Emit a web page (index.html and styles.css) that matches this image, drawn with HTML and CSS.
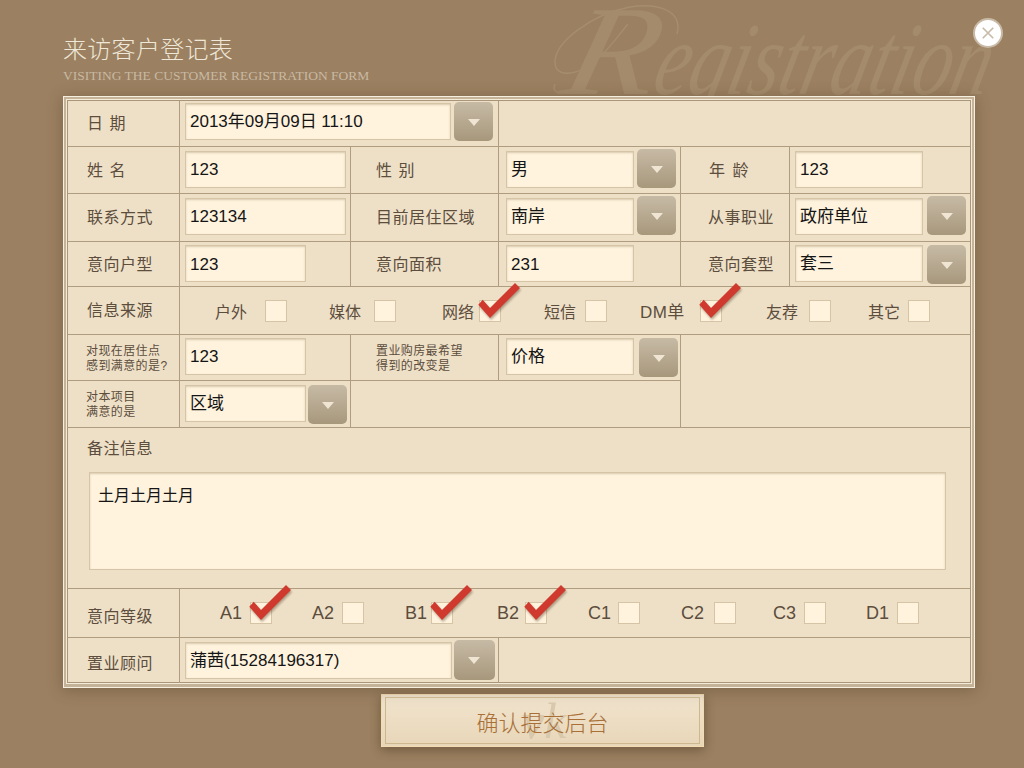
FILE: index.html
```html
<!DOCTYPE html>
<html lang="zh-CN">
<head>
    <meta charset="UTF-8">
    <meta name="viewport" content="width=device-width, initial-scale=1.0">
    <title>来访客户登记表</title>
    <link rel="stylesheet" href="styles.css">
</head>
<body>
    <svg width="0" height="0" class="defs">
        <symbol id="tick" viewBox="0 0 42 36">
            <polygon points="0.3,21.7 4.7,16.7 12,25 37,0 42,5 12,35"></polygon>
        </symbol>
    </svg>

    <div class="page">
        <svg class="watermark" width="472" height="150" viewBox="0 0 472 150">
            <path d="M125 34 C131 12 108 2 78 7 C40 14 3 42 3 62 C3 78 24 76 42 62 C56 51 66 36 76 24"></path>
            <path d="M3 84 C-1 92 8 96 16 90"></path>
            <g transform="translate(6 94) skewX(-14)">
                <text class="wm-cap" textLength="92" lengthAdjust="spacingAndGlyphs">R</text>
                <text class="wm-rest" x="92" textLength="335" lengthAdjust="spacingAndGlyphs">egistration</text>
            </g>
        </svg>
        <div class="close-btn">
            <svg width="14" height="14" viewBox="0 0 16 16"><path d="M2 2 L14 14 M14 2 L2 14"></path></svg>
        </div>

        <header class="head">
            <h1>来访客户登记表</h1>
            <p>VISITING THE CUSTOMER REGISTRATION FORM</p>
        </header>

        <div class="panel">
            <div class="sheet">
                <!-- row 1 -->
                <div class="cell label spaced">日 期</div>
                <div class="cell ctl ctl-top span-2">
                    <div class="field field-long">2013年09月09日 11:10</div>
                    <div class="drop drop-top"></div>
                </div>
                <div class="cell span-3 no-right"></div>

                <!-- row 2 -->
                <div class="cell label spaced">姓 名</div>
                <div class="cell ctl"><div class="field field-wide">123</div></div>
                <div class="cell label label-mid spaced">性 别</div>
                <div class="cell ctl ctl-sel">
                    <div class="field">男</div>
                    <div class="drop"></div>
                </div>
                <div class="cell label label-age spaced">年 龄</div>
                <div class="cell ctl no-right"><div class="field">123</div></div>

                <!-- row 3 -->
                <div class="cell label">联系方式</div>
                <div class="cell ctl"><div class="field field-wide">123134</div></div>
                <div class="cell label label-mid">目前居住区域</div>
                <div class="cell ctl ctl-sel">
                    <div class="field">南岸</div>
                    <div class="drop"></div>
                </div>
                <div class="cell label label-end">从事职业</div>
                <div class="cell ctl no-right">
                    <div class="field">政府单位</div>
                    <div class="drop drop-nudge"></div>
                </div>

                <!-- row 4 -->
                <div class="cell label">意向户型</div>
                <div class="cell ctl ctl-tight"><div class="field field-short field-low">123</div></div>
                <div class="cell label label-mid">意向面积</div>
                <div class="cell ctl ctl-sel ctl-tight"><div class="field field-low">231</div></div>
                <div class="cell label label-end">意向套型</div>
                <div class="cell ctl ctl-tight no-right">
                    <div class="field">套三</div>
                    <div class="drop drop-flush drop-nudge"></div>
                </div>

                <!-- row 5 -->
                <div class="cell label">信息来源</div>
                <div class="cell span-5 no-right opts opts-source">
                    <div class="opt"><span>户外</span><i class="box"></i></div>
                    <div class="opt"><span>媒体</span><i class="box"></i></div>
                    <div class="opt"><span>网络</span><i class="box on"><svg class="tick"><use href="#tick"></use></svg></i></div>
                    <div class="opt"><span>短信</span><i class="box"></i></div>
                    <div class="opt"><span class="latin">DM单</span><i class="box on"><svg class="tick"><use href="#tick"></use></svg></i></div>
                    <div class="opt"><span>友荐</span><i class="box"></i></div>
                    <div class="opt"><span>其它</span><i class="box"></i></div>
                </div>

                <!-- rows 6, 7 -->
                <div class="cell label label-small">对现在居住点<br>感到满意的是?</div>
                <div class="cell ctl ctl-tight"><div class="field field-short">123</div></div>
                <div class="cell label label-small label-mid">置业购房最希望<br>得到的改变是</div>
                <div class="cell ctl ctl-sel ctl-tight">
                    <div class="field">价格</div>
                    <div class="drop drop-flush drop-far"></div>
                </div>
                <div class="cell span-2 span-rows no-right"></div>

                <div class="cell label label-small">对本项目<br>满意的是</div>
                <div class="cell ctl">
                    <div class="field field-short">区域</div>
                    <div class="drop drop-flush drop-near"></div>
                </div>
                <div class="cell span-2"></div>

                <!-- row 8 -->
                <div class="cell span-6 no-right notes">
                    <div class="notes-title">备注信息</div>
                    <div class="notes-box">土月土月土月</div>
                </div>

                <!-- row 9 -->
                <div class="cell label label-low">意向等级</div>
                <div class="cell span-5 no-right opts opts-level">
                    <div class="opt"><span>A1</span><i class="box on"><svg class="tick"><use href="#tick"></use></svg></i></div>
                    <div class="opt"><span>A2</span><i class="box"></i></div>
                    <div class="opt"><span>B1</span><i class="box on"><svg class="tick"><use href="#tick"></use></svg></i></div>
                    <div class="opt"><span>B2</span><i class="box on"><svg class="tick"><use href="#tick"></use></svg></i></div>
                    <div class="opt"><span>C1</span><i class="box"></i></div>
                    <div class="opt"><span>C2</span><i class="box"></i></div>
                    <div class="opt"><span>C3</span><i class="box"></i></div>
                    <div class="opt"><span>D1</span><i class="box"></i></div>
                </div>

                <!-- row 10 -->
                <div class="cell label label-low no-bottom">置业顾问</div>
                <div class="cell ctl span-2 no-bottom">
                    <div class="field field-longer">蒲茜(15284196317)</div>
                    <div class="drop drop-big"></div>
                </div>
                <div class="cell span-3 no-right no-bottom"></div>
            </div>
        </div>

        <div class="submit">
            <div class="submit-inner">
                <span class="submit-mark">vk</span>
                <span class="submit-text">确认提交后台</span>
            </div>
        </div>
    </div>
</body>
</html>
```

FILE: styles.css
```css
* {
    margin: 0;
    padding: 0;
    box-sizing: border-box;
}

body {
    background-color: #9b8061;
    font-family: "Liberation Sans", "Noto Sans CJK SC", sans-serif;
    overflow: hidden;
}

.defs {
    position: absolute;
}

.page {
    position: relative;
    width: 1024px;
    height: 768px;
    padding: 36px 0 0 63px;
    overflow: hidden;
}

.watermark {
    position: absolute;
    left: 552px;
    top: 0;
}

.watermark path {
    fill: none;
    stroke: #a68d6f;
    stroke-width: 1.5;
}

.watermark text {
    font-family: "Liberation Serif", serif;
    font-style: italic;
    fill: #a48b6c;
}

.wm-cap { font-size: 128px; }
.wm-rest { font-size: 104px; }

.close-btn {
    position: absolute;
    left: 973px;
    top: 18px;
    width: 30px;
    height: 30px;
    border-radius: 50%;
    border: 2px solid #c8baa6;
    background-color: #fff;
    display: flex;
    align-items: center;
    justify-content: center;
}

.close-btn path {
    stroke: #c9bcaa;
    stroke-width: 2;
    fill: none;
}

.head {
    position: relative;
    height: 60px;
}

.head h1 {
    font-family: "Liberation Serif", "Noto Sans CJK SC", serif;
    font-size: 24px;
    font-weight: 200;
    line-height: 28px;
    letter-spacing: 0.3px;
    color: #efe7d8;
}

.head p {
    font-family: "Liberation Serif", serif;
    font-size: 13.5px;
    line-height: 16px;
    margin-top: 4px;
    color: #c8b9a1;
}

/* form sheet */
.panel {
    position: relative;
    width: 912px;
    height: 592px;
    border: 1px solid #f6efe1;
    padding: 3px;
    background-color: #c4b397;
    box-shadow: 0 2px 14px rgba(70, 50, 25, 0.35);
}

.sheet {
    height: 583px;
    border: 1px solid #a8957a;
    background-color: #eee0c7;
    box-shadow: 0 0 0 1px #f3ead9;
    display: grid;
    grid-template-columns: 112px 171px 148px 182px 109px 180px;
    grid-template-rows: 46px 47px 48px 45px 48px 46px 47px 161px 49px 45px;
}

.cell {
    border-right: 1px solid #b09d80;
    border-bottom: 1px solid #b09d80;
    min-width: 0;
}

.no-right { border-right: 0; }
.no-bottom { border-bottom: 0; }
.span-2 { grid-column: span 2; }
.span-3 { grid-column: span 3; }
.span-5 { grid-column: span 5; }
.span-6 { grid-column: span 6; }
.span-rows { grid-row: span 2; }

.label {
    display: flex;
    align-items: center;
    padding: 0 0 3px 19px;
    font-size: 16px;
    letter-spacing: 0.5px;
    color: #5c4d3d;
}

.spaced { letter-spacing: 1px; }

.label-small {
    padding: 2px 0 0 18px;
    font-size: 12px;
    line-height: 15px;
    letter-spacing: 0.4px;
}

.label-mid { padding-left: 25px; }
.label-end { padding-left: 27px; }
.label-age { padding-left: 28px; letter-spacing: 1.5px; }
.label-low { padding: 3px 0 0 19px; }

/* inputs and their dropdown buttons */
.ctl {
    display: flex;
    align-items: flex-start;
    gap: 3px;
    padding: 4px 0 0 5px;
}

.ctl-top { padding-top: 2px; }
.ctl-tight { padding-top: 3px; }
.ctl-sel { padding-left: 7px; }

.field {
    flex: none;
    width: 128px;
    height: 37px;
    padding-left: 4px;
    border: 1px solid #d5c4a6;
    box-shadow: inset 0 1px 2px rgba(130, 105, 70, 0.3);
    background-color: #fff3de;
    font-size: 17px;
    line-height: 36px;
    color: #151515;
    white-space: nowrap;
}

.field-wide { width: 161px; }
.field-short { width: 121px; }
.field-long { width: 266px; }
.field-longer { width: 267px; }
.field-low { line-height: 38px; }

.drop {
    flex: none;
    position: relative;
    width: 39px;
    height: 39px;
    margin-top: -2px;
    border-radius: 5px;
    background: linear-gradient(#c7baa5, #a7987c);
}

.drop::after {
    content: "";
    position: absolute;
    left: 14px;
    top: 17px;
    border-left: 6px solid transparent;
    border-right: 6px solid transparent;
    border-top: 7px solid #efe5d2;
}

.drop-top { margin-top: -1px; }
.drop-flush { margin-top: 0; }
.drop-far { margin-left: 2px; }
.drop-nudge { margin-left: 1px; }
.drop-near { margin-left: -1px; }
.drop-big { width: 41px; height: 40px; margin-left: -1px; }

/* checkbox rows */
.opts {
    display: flex;
    align-items: center;
}

.opts-source { padding-left: 35px; }
.opts-level { padding-left: 40px; }

.opt {
    flex: none;
    display: flex;
    align-items: center;
    justify-content: space-between;
    font-size: 16px;
    color: #5c4d3d;
}

.opts-level .opt {
    font-size: 18px;
}

.opt .latin {
    font-size: 17px;
    letter-spacing: 0.4px;
}

.box {
    position: relative;
    display: block;
    width: 22px;
    height: 22px;
    border: 1px solid #d5c4a6;
    background-color: #fff3de;
}

.tick {
    position: absolute;
    left: -2px;
    top: -18px;
    width: 42px;
    height: 36px;
    fill: #d03a2e;
    filter: drop-shadow(1px 2px 1px rgba(70, 50, 25, 0.4));
}

.opts-source .opt:nth-child(1) { width: 72px; }
.opts-source .opt:nth-child(2) { width: 67px; margin-left: 42px; }
.opts-source .opt:nth-child(3) { width: 59px; margin-left: 46px; }
.opts-source .opt:nth-child(4) { width: 63px; margin-left: 43px; }
.opts-source .opt:nth-child(5) { width: 82px; margin-left: 33px; }
.opts-source .opt:nth-child(6) { width: 65px; margin-left: 44px; }
.opts-source .opt:nth-child(7) { width: 62px; margin-left: 37px; }

.opts-level .opt:nth-child(1) { width: 52px; }
.opts-level .opt:nth-child(2) { width: 52px; margin-left: 40px; }
.opts-level .opt:nth-child(3) { width: 48px; margin-left: 41px; }
.opts-level .opt:nth-child(4) { width: 50px; margin-left: 44px; }
.opts-level .opt:nth-child(5) { width: 52px; margin-left: 41px; }
.opts-level .opt:nth-child(6) { width: 55px; margin-left: 41px; }
.opts-level .opt:nth-child(7) { width: 53px; margin-left: 37px; }
.opts-level .opt:nth-child(8) { width: 53px; margin-left: 40px; }

/* notes */
.notes {
    padding: 10px 0 0 21px;
}

.notes-title {
    font-size: 16px;
    line-height: 22px;
    letter-spacing: 0.5px;
    color: #5c4d3d;
    margin-left: -2px;
}

.notes-box {
    width: 857px;
    height: 98px;
    margin-top: 12px;
    padding: 12px 8px;
    border: 1px solid #d5c4a6;
    box-shadow: inset 0 1px 2px rgba(130, 105, 70, 0.3);
    background-color: #fff3de;
    font-size: 16px;
    line-height: 22px;
    color: #151515;
}

/* submit */
.submit {
    width: 323px;
    height: 53px;
    margin: 6px 0 0 318px;
    padding: 2px 3px;
    background: linear-gradient(#f1e4ce, #e8d6b8);
    border: 1px solid #f3dcb2;
    box-shadow: 0 3px 10px rgba(60, 40, 20, 0.45);
}

.submit-inner {
    position: relative;
    height: 100%;
    border: 1px solid #cdb78f;
    display: flex;
    align-items: center;
    justify-content: center;
}

.submit-text {
    position: relative;
    font-family: "Liberation Serif", "Noto Sans CJK SC", serif;
    font-size: 22px;
    font-weight: 200;
    color: #a86f36;
}

.submit-mark {
    position: absolute;
    left: 136px;
    top: 0;
    font-family: "Liberation Serif", serif;
    font-style: italic;
    font-size: 50px;
    line-height: 46px;
    color: #d8c8ac;
}
```
